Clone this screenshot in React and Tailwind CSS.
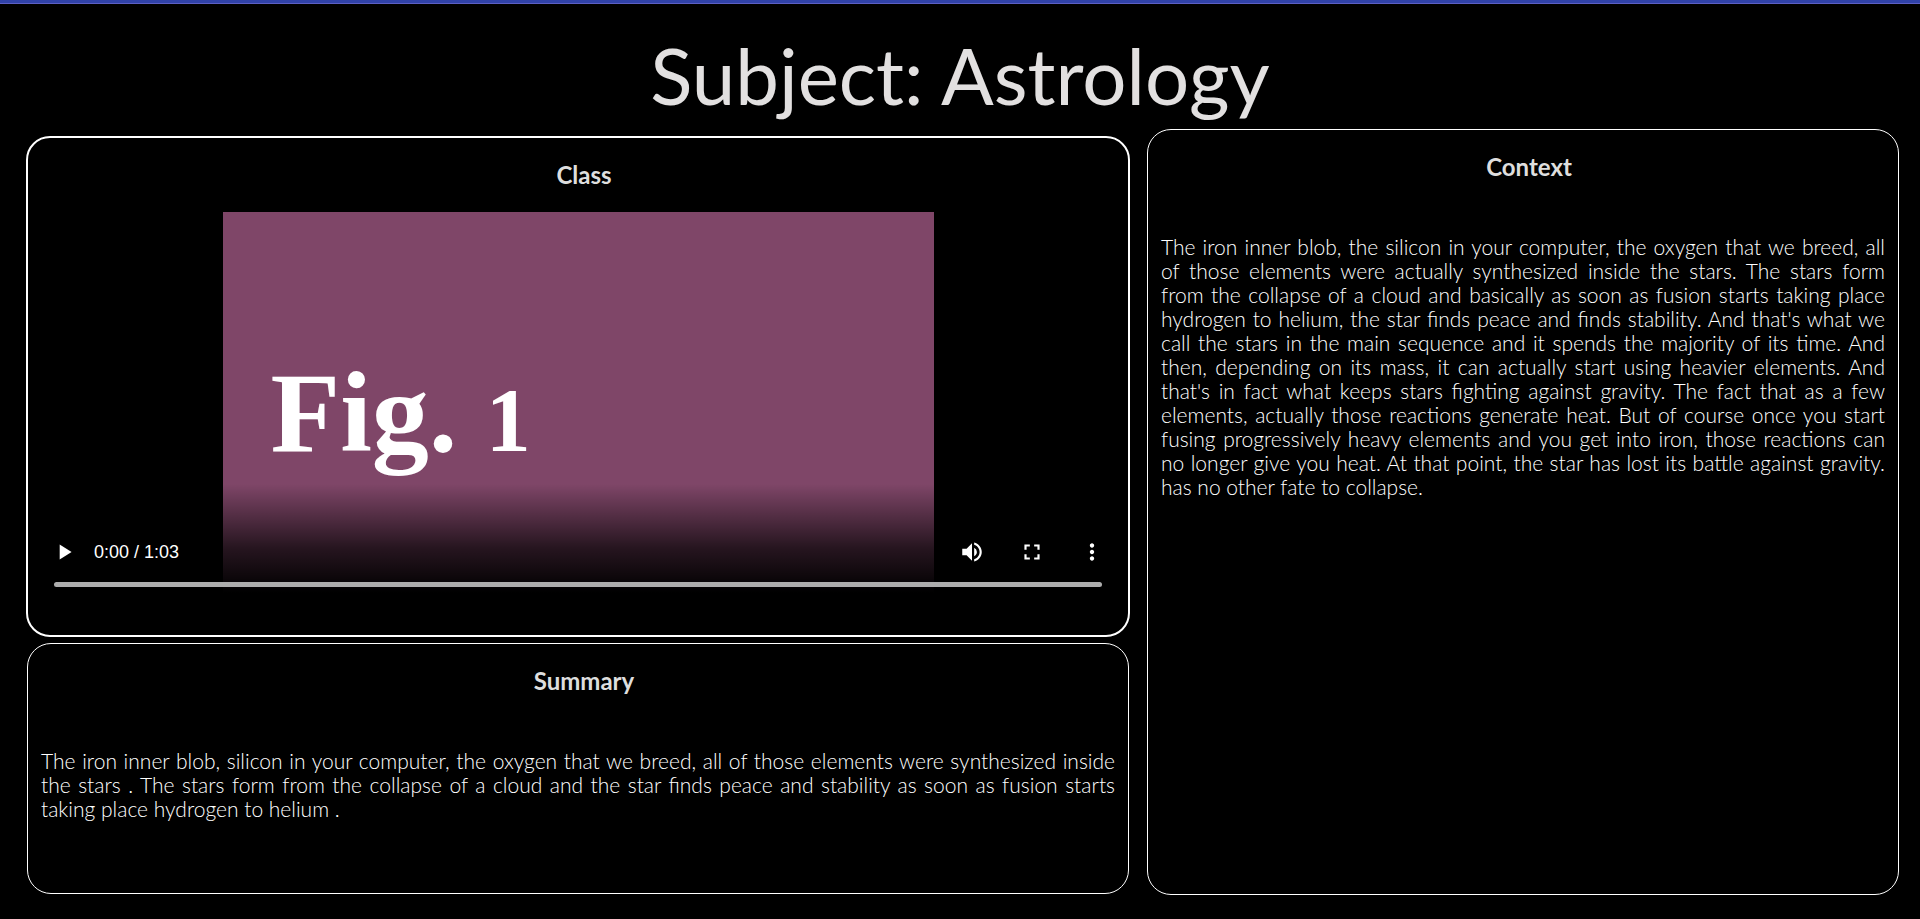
import { MdFullscreen, MdMoreVert, MdPlayArrow, MdVolumeUp } from "react-icons/md";

const CONTEXT =
  "The iron inner blob, the silicon in your computer, the oxygen that we breed, all of those elements were actually synthesized inside the stars. The stars form from the collapse of a cloud and basically as soon as fusion starts taking place hydrogen to helium, the star finds peace and finds stability. And that's what we call the stars in the main sequence and it spends the majority of its time. And then, depending on its mass, it can actually start using heavier elements. And that's in fact what keeps stars fighting against gravity. The fact that as a few elements, actually those reactions generate heat. But of course once you start fusing progressively heavy elements and you get into iron, those reactions can no longer give you heat. At that point, the star has lost its battle against gravity. has no other fate to collapse.";

const SUMMARY =
  "The iron inner blob, silicon in your computer, the oxygen that we breed, all of those elements were synthesized inside the stars . The stars form from the collapse of a cloud and the star finds peace and stability as soon as fusion starts taking place hydrogen to helium .";

function CardTitle({ children }) {
  return <h2 className="pl-3 text-center text-2xl leading-6 font-bold text-[#dedede]">{children}</h2>;
}

function TextCard({ title, text, className }) {
  return (
    <section className={`mx-px rounded-3xl border border-white px-[13px] pt-[25px] pb-6 ${className}`}>
      <CardTitle>{title}</CardTitle>
      <p className="mt-14 text-justify text-[21px] leading-6 font-light text-white">{text}</p>
    </section>
  );
}

function ControlButton({ label, icon: Icon }) {
  return (
    <button type="button" aria-label={label} className="flex h-10 w-[52px] items-center justify-center">
      <Icon size={26} />
    </button>
  );
}

function Player() {
  return (
    <div className="relative mx-[10px] mt-[25px] text-white">
      <div className="mx-auto flex aspect-video w-[66%] max-w-[711px] items-end bg-[#7f4668] pb-[142px] pl-12 font-['Liberation_Serif',serif] text-[114px] leading-none font-bold">
        <p>
          Fig. <span className="text-[90px]">1</span>
        </p>
      </div>
      <div className="absolute inset-x-0 bottom-0 flex h-32 flex-col justify-end bg-linear-to-b from-transparent via-black/70 via-50% to-black to-85% pb-[25px]">
        <div className="flex items-center">
          <ControlButton label="Play" icon={MdPlayArrow} />
          <span className="ml-1 font-['Liberation_Sans',sans-serif] text-lg leading-6">0:00 / 1:03</span>
          <div className="ml-auto flex gap-2">
            <ControlButton label="Mute" icon={MdVolumeUp} />
            <ControlButton label="Full screen" icon={MdFullscreen} />
            <ControlButton label="More options" icon={MdMoreVert} />
          </div>
        </div>
        <input
          type="range"
          aria-label="Seek"
          min="0"
          max="63"
          defaultValue="0"
          className="mx-4 mt-[10px] block h-[5px] appearance-none rounded-full bg-[#adadad] [&::-webkit-slider-thumb]:size-0 [&::-webkit-slider-thumb]:appearance-none"
        />
      </div>
    </div>
  );
}

export default function App() {
  return (
    <div className="min-h-screen bg-black font-[Lato,sans-serif]">
      <div className="h-1 border-b border-[#5c5fc4] bg-[#3042a8]" />
      <h1 className="pt-[23px] pb-[6px] text-center text-[78px] leading-24 text-[#e2e0e0]">Subject: Astrology</h1>
      <main className="grid grid-cols-[1104fr_754fr] gap-4 pr-5 pb-6 pl-[26px]">
        <div className="flex flex-col gap-[6px] pt-[7px] pb-px">
          <section className="rounded-3xl border-2 border-white pt-[25px] pb-[23px]">
            <CardTitle>Class</CardTitle>
            <Player />
          </section>
          <TextCard title="Summary" text={SUMMARY} className="min-h-[251px]" />
        </div>
        <TextCard title="Context" text={CONTEXT} className="" />
      </main>
    </div>
  );
}
